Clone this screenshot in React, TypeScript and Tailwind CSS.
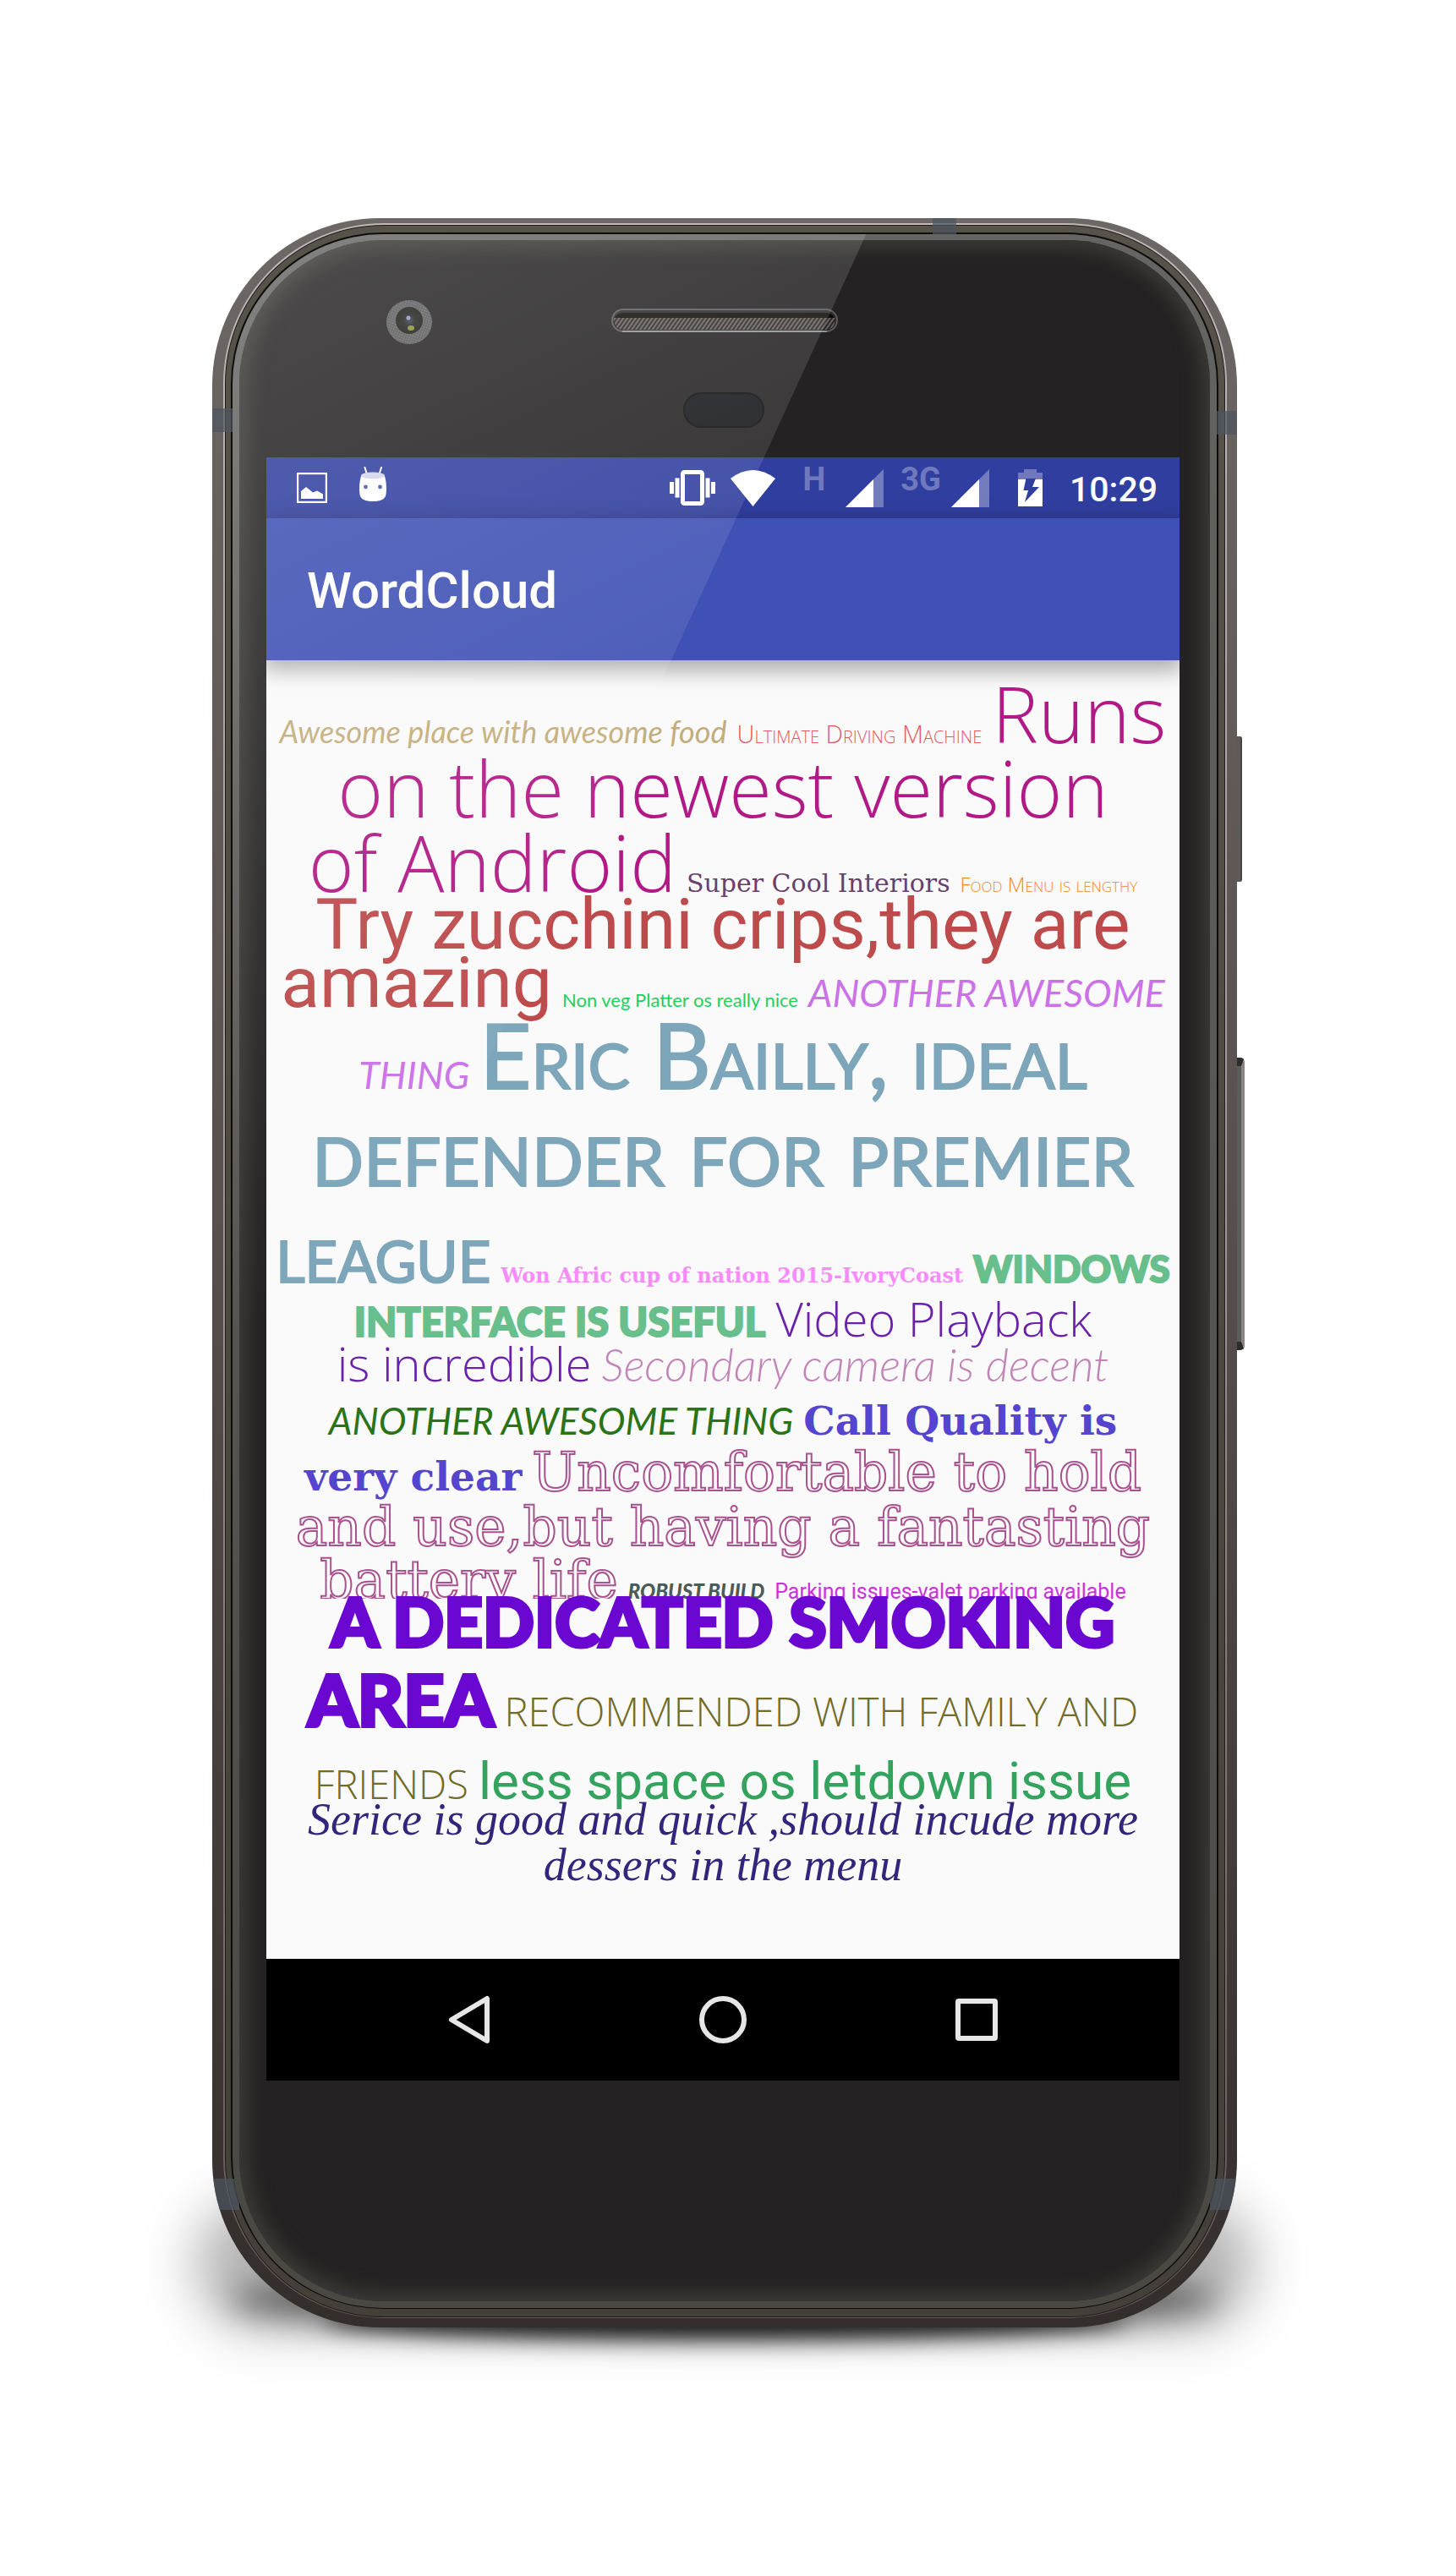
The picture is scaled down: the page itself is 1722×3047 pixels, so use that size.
import type { ReactNode } from 'react';

type Phrase = { text: string; className: string };
type Line = { height: string; clip?: boolean; phrases: Phrase[] };

const openLight = "font-['Open_Sans',sans-serif] font-light";
const roboto = "font-['Roboto',sans-serif]";
const script = "font-['Lato',sans-serif] italic";
const latoCaps = "font-['Lato',sans-serif] [font-variant-caps:small-caps] [-webkit-text-stroke:2px_#7da6ba] text-[#7da6ba]";
const latoBlack = "font-['Lato',sans-serif] font-black uppercase";
const serif = "font-['DejaVu_Serif',serif]";
const serifOutline = "font-['DejaVu_Serif',serif] text-[63px] text-transparent [-webkit-text-stroke:2px_#a9528f]";
const serifItalic = "font-['Liberation_Serif',serif] italic text-[54px] text-[#33247c]";

const lines: Line[] = [
  {
    height: 'h-[98px]',
    phrases: [
      { text: 'Awesome place with awesome food', className: `${script} text-[36px] text-[#c3ad7c]` },
      { text: 'Ultimate Driving Machine', className: `${openLight} [font-variant-caps:small-caps] text-[29px] text-[#e25b62]` },
      { text: 'Runs', className: `${openLight} text-[92px] text-[#b11a86]` },
    ],
  },
  { height: 'h-[88px]', phrases: [{ text: 'on the newest version', className: `${openLight} text-[92px] text-[#b11a86]` }] },
  {
    height: 'h-[88px]',
    phrases: [
      { text: 'of Android', className: `${openLight} text-[92px] text-[#b11a86]` },
      { text: 'Super Cool Interiors', className: `${serif} text-[30px] text-[#6b3f6b]` },
      { text: 'Food Menu is lengthy', className: `${openLight} [font-variant-caps:small-caps] text-[24px] text-[#f5861f]` },
    ],
  },
  { height: 'h-[67px]', phrases: [{ text: 'Try zucchini crips,they are', className: `${roboto} text-[84px] text-[#bd4b4c]` }] },
  {
    height: 'h-[69px]',
    phrases: [
      { text: 'amazing', className: `${roboto} text-[84px] text-[#bd4b4c]` },
      { text: 'Non veg Platter os really nice', className: "font-['Lato',sans-serif] text-[22px] text-[#1fd05c]" },
      { text: 'Another Awesome', className: `${script} uppercase text-[45px] text-[#cb72e8]` },
    ],
  },
  {
    height: 'h-[97px]',
    phrases: [
      { text: 'thing', className: `${script} uppercase text-[45px] text-[#cb72e8]` },
      { text: 'Eric Bailly, ideal', className: `${latoCaps} text-[106px]` },
    ],
  },
  { height: 'h-[115px]', phrases: [{ text: 'defender for premier', className: `${latoCaps} text-[114px]` }] },
  {
    height: 'h-[114px]',
    phrases: [
      { text: 'league', className: `${latoCaps} text-[96px]` },
      { text: 'Won Afric cup of nation 2015-IvoryCoast', className: `${serif} font-bold text-[24px] text-[#f78cf9]` },
      { text: 'Windows', className: `${latoBlack} [-webkit-text-stroke:2px_#68bf8c] text-[44px] text-[#68bf8c]` },
    ],
  },
  {
    height: 'h-[64px]',
    phrases: [
      { text: 'Interface is useful', className: `${latoBlack} [-webkit-text-stroke:2px_#68bf8c] text-[47px] text-[#68bf8c]` },
      { text: 'Video Playback', className: `${openLight} text-[56px] text-[#6a22ab]` },
    ],
  },
  {
    height: 'h-[53px]',
    phrases: [
      { text: 'is incredible', className: `${openLight} text-[56px] text-[#6a22ab]` },
      { text: 'Secondary camera is decent', className: `${script} font-light text-[53px] text-[#c285b8]` },
    ],
  },
  {
    height: 'h-[63px]',
    phrases: [
      { text: 'Another Awesome thing', className: `${script} uppercase text-[44px] text-[#2b7317]` },
      { text: 'Call Quality is', className: `${serif} font-bold text-[47px] text-[#5544cf]` },
    ],
  },
  {
    height: 'h-[66px]',
    phrases: [
      { text: 'very clear', className: `${serif} font-bold text-[47px] text-[#5544cf]` },
      { text: 'Uncomfortable to hold', className: serifOutline },
    ],
  },
  { height: 'h-[65px]', phrases: [{ text: 'and use,but having a fantasting', className: serifOutline }] },
  {
    height: 'h-[63px]',
    clip: true,
    phrases: [
      { text: 'battery life', className: serifOutline },
      { text: 'Robust Build', className: `${latoBlack} italic text-[24px] text-[#4a5a58]` },
      { text: 'Parking issues-valet parking available', className: `${roboto} text-[25px] text-[#cd31dd]` },
    ],
  },
  { height: 'h-[57px]', phrases: [{ text: 'A dedicated smoking', className: `${latoBlack} [-webkit-text-stroke:4px_#6a08d2] text-[80px] text-[#6a08d2]` }] },
  {
    height: 'h-[94px]',
    phrases: [
      { text: 'Area', className: `${latoBlack} [-webkit-text-stroke:4px_#6a08d2] text-[84px] text-[#6a08d2]` },
      { text: 'Recommended with family and', className: `${openLight} uppercase text-[47px] text-[#716c28]` },
    ],
  },
  {
    height: 'h-[86px]',
    phrases: [
      { text: 'friends', className: `${openLight} uppercase text-[47px] text-[#716c28]` },
      { text: 'less space os letdown issue', className: `${roboto} text-[62px] text-[#33a35e]` },
    ],
  },
  { height: 'h-[42px]', phrases: [{ text: 'Serice is good and quick ,should incude more', className: serifItalic }] },
  { height: 'h-[54px]', phrases: [{ text: 'dessers in the menu', className: serifItalic }] },
];

/* The zero-width strut sets the baseline at the bottom edge of each line. */
function CloudLine({ line }: { line: Line }) {
  return (
    <p className={`flex items-baseline justify-center gap-3 leading-[0] whitespace-nowrap ${line.clip ? 'overflow-hidden' : ''}`}>
      <span className={`-mr-3 w-0 ${line.height}`} />
      {line.phrases.map((p) => (
        <span key={p.text} className={p.className}>{p.text}</span>
      ))}
    </p>
  );
}

function Signal() {
  return (
    <svg viewBox="0 0 45 45" className="h-[45px] w-[45px]" aria-hidden="true">
      <path d="M45 0V45H0Z" fill="#fff" fillOpacity=".32" />
      <path d="M33 12V45H0Z" fill="#fff" />
    </svg>
  );
}

function StatusBar() {
  return (
    <div className="flex h-[72px] items-center bg-[#303f9f] pr-[26px] pl-9 text-white">
      <svg viewBox="0 0 36 36" className="h-9 w-9" aria-hidden="true">
        <rect x="1" y="1" width="34" height="34" fill="none" stroke="#fff" strokeWidth="2.4" />
        <path d="M5 31V22L11 17L19 23.500L24 21.500L31 25.500V31Z" fill="#fff" />
      </svg>
      <svg viewBox="0 0 34 42" className="mb-2 ml-[37px] h-[42px] w-[34px]" aria-hidden="true">
        <path d="M7.500 1L10 9M27 1L24.500 9" stroke="#fff" strokeWidth="2" strokeLinecap="round" />
        <path d="M3 11Q0 22 1.500 33Q3 41 17 41T32.500 33Q34 22 31 11Q17 17 3 11Z" fill="#fff" />
        <ellipse cx="17" cy="10.500" rx="14" ry="4" fill="#d3d6ec" />
        <circle cx="8.500" cy="24" r="2.400" fill="#4a58a9" />
        <circle cx="25.500" cy="24" r="2.400" fill="#4a58a9" />
      </svg>
      <div className="ml-auto flex items-center">
        <svg viewBox="0 0 54 42" className="h-[42px] w-[54px]" aria-hidden="true">
          <rect x="15.500" y="2.500" width="23" height="37" rx="2" fill="none" stroke="#fff" strokeWidth="5" />
          <path d="M0 14h5v14H0zM6.500 9.500h5v23h-5zM42.500 9.500h5v23h-5zM49 14h5v14h-5z" fill="#fff" />
        </svg>
        <svg viewBox="0 0 53 43" className="ml-[18px] h-[43px] w-[53px]" aria-hidden="true">
          <path d="M0 10Q26.500 -10 53 10L26.500 43Z" fill="#fff" />
        </svg>
        <span className="ml-8 pb-5 font-['Roboto',sans-serif] text-[38px] leading-none font-bold text-[#7079bd]">H</span>
        <span className="ml-6"><Signal /></span>
        <span className="ml-5 pb-5 font-['Roboto',sans-serif] text-[38px] leading-none font-bold text-[#7079bd]">3G</span>
        <span className="ml-3"><Signal /></span>
        <svg viewBox="0 0 29 44" className="ml-[34px] h-11 w-[29px]" aria-hidden="true">
          <path d="M7 0H22V4H29V13H0V4H7Z" fill="#7079bd" />
          <path d="M0 12H29V44H0Z" fill="#fff" />
          <path d="M9.500 11H21L17 21H25L8 39L12 25H6.500Z" fill="#303f9f" />
        </svg>
        <time className="ml-8 pt-1 font-['Roboto',sans-serif] text-[41px] leading-none font-medium">10:29</time>
      </div>
    </div>
  );
}

function NavButton({ label, children }: { label: string; children: ReactNode }) {
  return (
    <button type="button" aria-label={label} className="flex h-full w-[300px] items-center justify-center">
      <svg viewBox="0 0 60 60" className="h-[60px] w-[60px]" fill="none" stroke="#e6e6e6" strokeWidth="6" strokeLinejoin="round" aria-hidden="true">
        {children}
      </svg>
    </button>
  );
}

function Screen() {
  return (
    <div className="overflow-hidden bg-[#fafafa]">
      <StatusBar />
      <header className="flex h-[168px] items-center bg-[#3f51b5] px-12 pt-1 shadow-[0_8px_24px_4px_rgba(0,0,0,0.32)]">
        <h1 className="font-['Roboto',sans-serif] text-[60px] leading-none font-medium text-white">WordCloud</h1>
      </header>
      <main className="pb-[93px]">
        {lines.map((line, i) => (
          <CloudLine key={i} line={line} />
        ))}
      </main>
      <nav className="flex h-36 justify-center bg-black">
        <NavButton label="Back"><path d="M51 5V55L9 30Z" /></NavButton>
        <NavButton label="Home"><circle cx="30" cy="30" r="25" /></NavButton>
        <NavButton label="Recent apps"><rect x="8" y="8" width="44" height="44" rx="1" /></NavButton>
      </nav>
    </div>
  );
}

function TopBezel() {
  return (
    <svg viewBox="32 0 1080 257" className="block h-[257px] w-full" aria-hidden="true">
      <defs>
        <pattern id="mesh" width="4" height="4" patternUnits="userSpaceOnUse" patternTransform="rotate(35)">
          <rect width="4" height="4" fill="#2a2625" />
          <rect width="2" height="4" fill="#6a6462" />
        </pattern>
        <pattern id="speckle" width="3" height="3" patternUnits="userSpaceOnUse" patternTransform="rotate(20)">
          <rect width="3" height="3" fill="#5a5a5b" />
          <rect width="1" height="1" fill="#818182" />
        </pattern>
        <radialGradient id="lens">
          <stop offset="0" stopColor="#3b3f55" />
          <stop offset=".45" stopColor="#22241f" />
          <stop offset="1" stopColor="#1b1b18" />
        </radialGradient>
      </defs>
      <ellipse cx="201" cy="97" rx="27" ry="26" fill="url(#speckle)" />
      <circle cx="201" cy="95" r="16" fill="url(#lens)" />
      <circle cx="200" cy="92" r="2.500" fill="#8f97c9" />
      <ellipse cx="203" cy="104" rx="4" ry="3" fill="#8d8f3c" />
      <rect x="441" y="82" width="266" height="26" rx="13" fill="#2b2a2d" stroke="#5b5a5e" strokeWidth="2" />
      <rect x="443" y="86" width="262" height="20" rx="10" fill="#0f0c0a" />
      <path d="M443 92H705Q705 106 693 106H455Q443 106 443 92Z" fill="url(#mesh)" />
      <path d="M453 108H695" stroke="#8e9296" strokeWidth="2" />
      <rect x="526" y="181" width="94" height="40" rx="20" fill="#15171a" stroke="#0d0d0d" strokeWidth="2" />
    </svg>
  );
}

function Glare() {
  return (
    <svg viewBox="0 0 1165 2454" preserveAspectRatio="none" className="pointer-events-none absolute inset-0 h-full w-full" aria-hidden="true">
      <defs>
        <linearGradient id="glare" gradientUnits="userSpaceOnUse" x1="0" y1="0" x2="512" y2="1067">
          <stop offset="0" stopColor="#fff" stopOpacity=".19" />
          <stop offset="1" stopColor="#fff" stopOpacity="0" />
        </linearGradient>
      </defs>
      <path d="M0 0H750L0 1638Z" fill="url(#glare)" />
    </svg>
  );
}

export default function App() {
  return (
    <div className="flex justify-center overflow-hidden bg-white pt-[258px] pr-2 pb-[294px]">
      <div className="relative w-full max-w-[1212px]">
        <div className="absolute -right-5 bottom-0 -left-5 h-[150px] rounded-[90px] bg-black/30 blur-[32px]" />
        <div className="absolute right-5 -bottom-2 left-5 h-20 rounded-[50%] bg-black/50 blur-[18px]" />
        <div className="absolute right-[130px] -bottom-3 left-[130px] h-10 rounded-[50%] bg-black/80 blur-[12px]" />
        <div className="absolute top-[583px] -right-[6px] h-[172px] w-3 rounded-r-[3px] border-r-2 border-[#4a4344] bg-[#5d5b58] mt-[30px]" />
        <div className="absolute top-[993px] -right-[9px] h-[346px] w-4 rounded-r-[5px] border-y-[10px] border-r-4 border-t-[#2d2c28] border-r-[#8a8486] border-b-[#2d2c28] bg-[#5b5e57]" />

        <div className="relative overflow-hidden rounded-[198px] bg-linear-to-b from-[#6d6865] via-[#564e4d] to-[#332e2b] pt-[6px] pr-3 pb-[11px] pl-[13px]">
          <div className="rounded-[190px] bg-linear-to-b from-[#bcbabb] via-[#9c9496] to-[#5e5856] px-[2px] pt-[2px] pb-px">
            <div className="rounded-[188px] bg-[#241a1b] p-px">
              <div className="rounded-[187px] bg-linear-to-b from-[#57534a] to-[#434039] pt-2 pr-[7px] pb-[9px] pl-[6px]">
                <div className="rounded-[180px] bg-[#0e0d0a] px-[2px] pt-[2px] pb-px">
                  <div className="relative z-10 overflow-hidden rounded-[178px] bg-linear-to-b from-[#656563] via-[#555552] to-[#494843] px-2 pt-[7px] pb-2">
                    <div className="rounded-[170px] bg-[#242222] pr-9 pb-[261px] pl-8 shadow-[inset_0_0_22px_10px_#3c3b38]">
                      <TopBezel />
                      <Screen />
                    </div>
                    <Glare />
                  </div>
                </div>
              </div>
            </div>
          </div>
          <div className="absolute top-[225px] left-0 h-[28px] w-6 bg-[#4d565f]/70" />
          <div className="absolute top-0 right-[332px] h-5 w-[28px] bg-[#4d565f]/70" />
          <div className="absolute top-[228px] right-0 h-[28px] w-6 bg-[#4d565f]/70" />
          <div className="absolute bottom-[139px] left-0 h-[37px] w-8 bg-[#4d565f]/70" />
          <div className="absolute right-0 bottom-[139px] h-[37px] w-8 bg-[#4d565f]/70" />
        </div>
      </div>
    </div>
  );
}
